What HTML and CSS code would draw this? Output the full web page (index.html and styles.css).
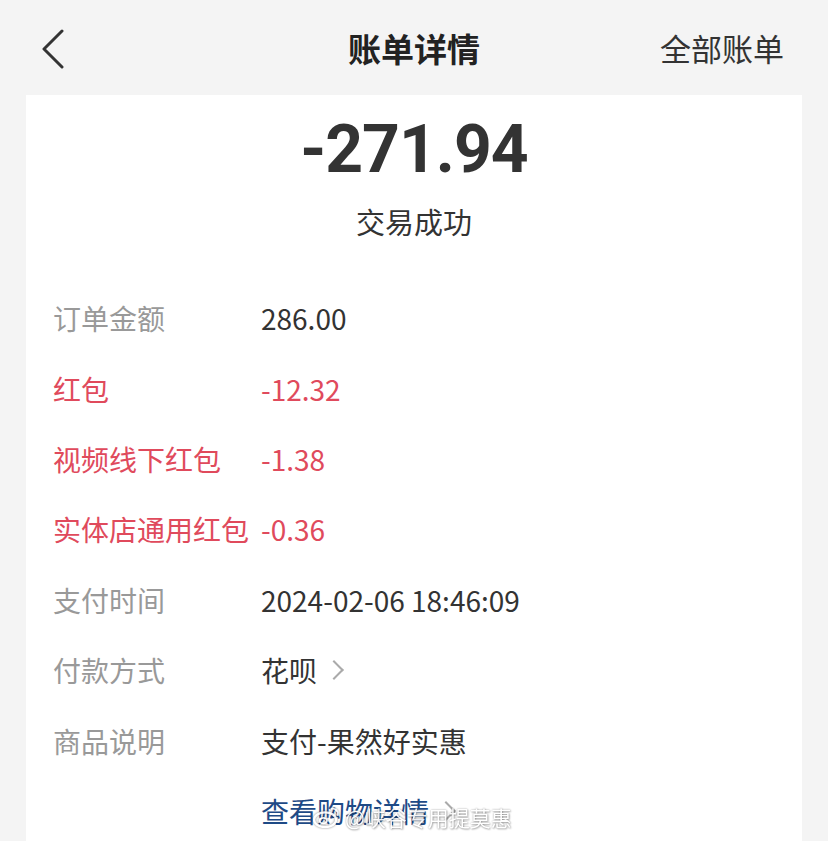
FILE: index.html
```html
<!DOCTYPE html>
<html lang="zh-CN">
<head>
    <meta charset="UTF-8">
    <meta name="viewport" content="width=device-width, initial-scale=1.0">
    <title>账单详情</title>
    <link rel="stylesheet" href="styles.css">
</head>
<body>

    <div class="header">
        <a href="#" class="back">
            <svg width="26" height="40" viewBox="0 0 26 40">
                <path d="M22 2 L4 20 L22 38" fill="none" stroke="#333" stroke-width="3" stroke-linecap="round" stroke-linejoin="round"/>
            </svg>
        </a>
        <h1>账单详情</h1>
        <a href="#" class="all-bills">全部账单</a>
    </div>

    <div class="card">
        <div class="amount">-271.94</div>
        <div class="status">交易成功</div>

        <div class="details">
            <div class="row">
                <span class="label">订单金额</span>
                <span class="value">286.00</span>
            </div>
            <div class="row red">
                <span class="label">红包</span>
                <span class="value">-12.32</span>
            </div>
            <div class="row red">
                <span class="label">视频线下红包</span>
                <span class="value">-1.38</span>
            </div>
            <div class="row red">
                <span class="label">实体店通用红包</span>
                <span class="value">-0.36</span>
            </div>
            <div class="row">
                <span class="label">支付时间</span>
                <span class="value">2024-02-06 18:46:09</span>
            </div>
            <div class="row">
                <span class="label">付款方式</span>
                <span class="value">花呗 <span class="arrow"></span></span>
            </div>
            <div class="row">
                <span class="label">商品说明</span>
                <span class="value">支付-果然好实惠</span>
            </div>
            <div class="row">
                <span class="label"></span>
                <a href="#" class="value link">查看购物详情 <span class="arrow"></span></a>
            </div>
        </div>

        <!-- weibo watermark -->
        <div class="watermark">
            <svg width="28" height="22" viewBox="0 0 30 24">
                <ellipse cx="14" cy="15" rx="12" ry="8" fill="none" stroke="#fff" stroke-width="2.5"/>
                <ellipse cx="12" cy="16" rx="4" ry="3" fill="none" stroke="#fff" stroke-width="2"/>
                <path d="M21 3 a6 6 0 0 1 7 7" fill="none" stroke="#fff" stroke-width="2" stroke-linecap="round"/>
            </svg>
            <span>@峡谷专用提莫惠</span>
        </div>
    </div>

</body>
</html>
```

FILE: styles.css
```css
* {
    margin: 0;
    padding: 0;
    box-sizing: border-box;
}

body {
    font-family: "Noto Sans CJK SC", "Noto Sans", sans-serif;
    background-color: #f4f4f4;
    color: #333;
    overflow: hidden;
}

a {
    text-decoration: none;
}

.header {
    height: 95px;
    display: flex;
    align-items: center;
    justify-content: space-between;
    padding: 0 44px 0 40px;
    position: relative;
}

.header .back {
    display: flex;
    margin-top: 3px;
}

.header h1 {
    position: absolute;
    left: 0;
    right: 0;
    text-align: center;
    font-size: 33px;
    font-weight: 700;
    color: #222;
    pointer-events: none;
}

.header .all-bills {
    font-size: 31px;
    color: #333;
}

.card {
    background-color: #fff;
    margin: 0 26px;
    height: 760px;
    position: relative;
}

.amount {
    text-align: center;
    font-family: Roboto, sans-serif;
    font-weight: 700;
    font-size: 66px;
    line-height: 80px;
    padding-top: 15px;
    color: #333;
    letter-spacing: -1px;
}

.status {
    text-align: center;
    font-size: 29px;
    line-height: 40px;
    margin-top: 11px;
    color: #333;
}

.details {
    margin-top: 42px;
    padding-left: 27px;
}

.row {
    display: flex;
    height: 70.4px;
    align-items: center;
    font-size: 28px;
}

.row .label {
    width: 208px;
    color: #999;
    flex-shrink: 0;
    white-space: nowrap;
}

.row .value {
    color: #333;
    display: flex;
    align-items: center;
}

.row.red .label,
.row.red .value {
    color: #e04a5c;
}

.arrow {
    display: inline-block;
    width: 14px;
    height: 14px;
    border-top: 2px solid #aaa;
    border-right: 2px solid #aaa;
    transform: rotate(45deg);
    margin-left: 10px;
}

.row .link {
    color: #1e4a86;
}

.watermark {
    position: absolute;
    left: 286px;
    top: 707px;
    display: flex;
    align-items: center;
    gap: 5px;
    font-size: 21px;
    color: #fff;
    text-shadow: 0 0 2px rgba(0, 0, 0, 0.45), 1px 1px 2px rgba(0, 0, 0, 0.3);
    opacity: 0.9;
}

.watermark svg {
    filter: drop-shadow(0 0 1px rgba(0, 0, 0, 0.5));
}
```
